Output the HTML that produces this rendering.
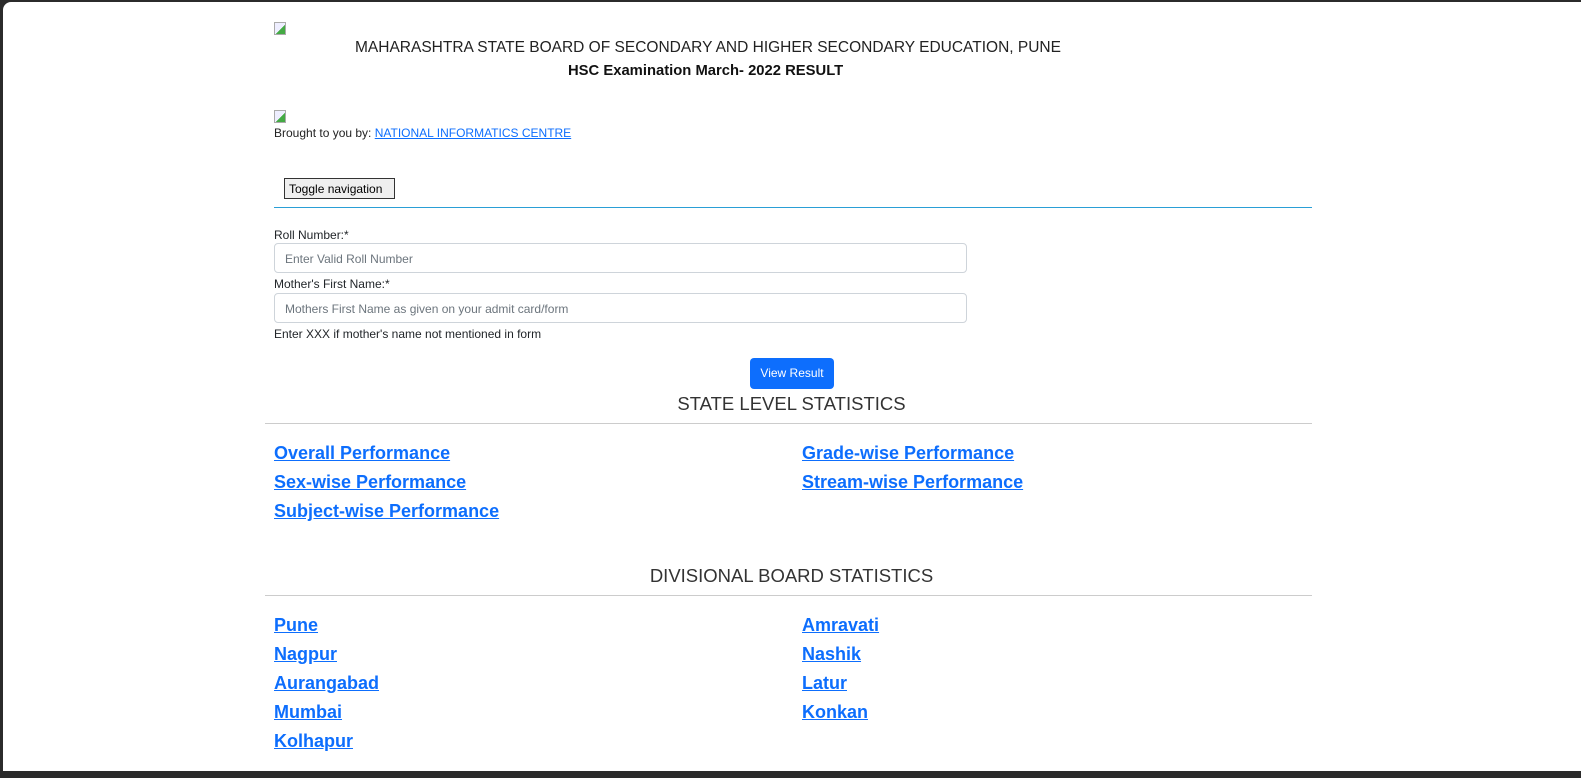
<!DOCTYPE html>
<html><head><meta charset="utf-8"><style>
html,body{margin:0;padding:0;width:1581px;height:778px;overflow:hidden;background:#2b2b2b;font-family:"Liberation Sans",sans-serif}
#win{position:absolute;left:3px;top:2px;width:1578px;height:769px;background:#fff;border-top-left-radius:8px}
.a{position:absolute;white-space:nowrap}
.img{position:absolute;width:12px;height:13px;border:1px solid #aaa;box-sizing:border-box;background:linear-gradient(135deg,#eef 0 55%,#4a4 55%)}
a{color:#0d6efd;text-decoration:underline}
.lk{position:absolute;font-size:18px;font-weight:bold;color:#0d6efd;text-decoration:underline;white-space:nowrap}
.inp{position:absolute;left:271px;width:693px;height:30px;border:1px solid #ced4da;border-radius:4px;box-sizing:border-box;font-size:12px;color:#6c757d;padding:8px 10px}
.lbl{position:absolute;left:271px;font-size:12px;color:#212529}
.hd{position:absolute;left:265px;width:1047px;text-align:center;font-size:18.5px;font-weight:300;color:#333}
.hr{position:absolute;left:262px;width:1047px;height:1px;background:#ccc}
</style></head><body><div id="win">
<div class="img" style="left:271px;top:20px"></div>
<div class="a" style="left:352px;top:37px;font-size:15.5px;color:#222">MAHARASHTRA STATE BOARD OF SECONDARY AND HIGHER SECONDARY EDUCATION, PUNE</div>
<div class="a" style="left:565px;top:61px;font-size:14.8px;font-weight:bold;color:#111">HSC Examination March- 2022 RESULT</div>
<div class="img" style="left:271px;top:108px"></div>
<div class="a" style="left:271px;top:124px;font-size:12px;color:#222">Brought to you by: <a>NATIONAL INFORMATICS CENTRE</a></div>
<div class="a" style="left:281px;top:176px;width:111px;height:21px;border:1px solid #333;background:#efefef;box-sizing:border-box;font-size:12px;padding:3px 4px">Toggle navigation</div>
<div style="position:absolute;left:271px;top:205px;width:1038px;height:1px;background:#2a9fd6"></div>
<div class="lbl" style="top:226px">Roll Number:*</div>
<div class="inp" style="top:241px">Enter Valid Roll Number</div>
<div class="lbl" style="top:275px">Mother's First Name:*</div>
<div class="inp" style="top:291px">Mothers First Name as given on your admit card/form</div>
<div class="lbl" style="top:325px">Enter XXX if mother's name not mentioned in form</div>
<div class="a" style="left:747px;top:356px;width:84px;height:31px;background:#0d6efd;border-radius:4px;color:#fff;font-size:12px;text-align:center;line-height:31px">View Result</div>
<div class="hd" style="top:391px">STATE LEVEL STATISTICS</div>
<div class="hr" style="top:421px"></div>
<div class="lk" style="left:271px;top:441px">Overall Performance</div>
<div class="lk" style="left:799px;top:441px">Grade-wise Performance</div>
<div class="lk" style="left:271px;top:470px">Sex-wise Performance</div>
<div class="lk" style="left:799px;top:470px">Stream-wise Performance</div>
<div class="lk" style="left:271px;top:499px">Subject-wise Performance</div>
<div class="hd" style="top:563px">DIVISIONAL BOARD STATISTICS</div>
<div class="hr" style="top:593px"></div>
<div class="lk" style="left:271px;top:613px">Pune</div>
<div class="lk" style="left:799px;top:613px">Amravati</div>
<div class="lk" style="left:271px;top:642px">Nagpur</div>
<div class="lk" style="left:799px;top:642px">Nashik</div>
<div class="lk" style="left:271px;top:671px">Aurangabad</div>
<div class="lk" style="left:799px;top:671px">Latur</div>
<div class="lk" style="left:271px;top:700px">Mumbai</div>
<div class="lk" style="left:799px;top:700px">Konkan</div>
<div class="lk" style="left:271px;top:729px">Kolhapur</div>
</div></body></html>
